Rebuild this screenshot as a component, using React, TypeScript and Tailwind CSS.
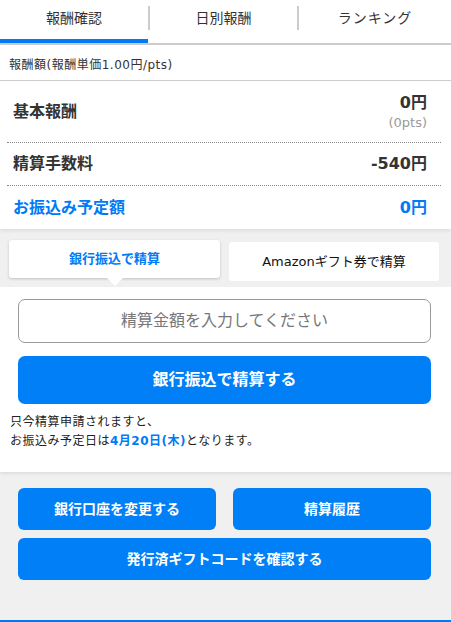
import React from "react";

const F = { fontFamily: '"DejaVu Sans", "Noto Sans CJK JP", sans-serif' };

export default function App() {
  return (
    <div className="w-[451px] h-[622px] bg-[#f0f0f0] text-[#333] overflow-hidden flex flex-col" style={F}>
      {/* tabs */}
      <div className="bg-white h-[45px] flex border-b-2 border-[#cccccc] shrink-0">
        <div className="relative w-[148px] flex items-center justify-center text-[14px] pb-[7px]">
          報酬確認
          <div className="absolute left-0 right-0 bottom-0 h-[4px] bg-[#007bf5]" />
        </div>
        <div className="w-[2px] h-[24px] mt-[6px] bg-[#cccccc]" />
        <div className="w-[147px] flex items-center justify-center text-[14px] pb-[7px]">日別報酬</div>
        <div className="w-[2px] h-[24px] mt-[6px] bg-[#cccccc]" />
        <div className="flex-1 flex items-center justify-center text-[14px] pb-[7px] tracking-[1px]">ランキング</div>
      </div>

      {/* summary */}
      <div className="bg-white shrink-0 shadow-[0_2px_3px_rgba(0,0,0,0.08)] relative z-10">
        <div className="h-[36px] border-b border-[#cccccc] flex items-end pb-[6px] pl-[9px] text-[12px] tracking-[0.5px]">
          報酬額(報酬単価1.00円/pts)
        </div>
        <div className="pl-[7px] pr-[10px]">
          <div className="h-[62px] border-b border-dotted border-[#888] flex items-center justify-between pl-[6px] pr-[14px]">
            <div className="text-[16px] font-bold">基本報酬</div>
            <div className="flex flex-col items-end">
              <div className="text-[16px] font-bold leading-[22px]">0円</div>
              <div className="text-[13px] text-[#999] leading-[18px]">(0pts)</div>
            </div>
          </div>
          <div className="h-[43px] border-b border-dotted border-[#888] flex items-center justify-between pl-[6px] pr-[14px]">
            <div className="text-[16px] font-bold">精算手数料</div>
            <div className="text-[16px] font-bold">-540円</div>
          </div>
          <div className="h-[43px] flex items-center justify-between pl-[6px] pr-[14px] text-[#007bf5]">
            <div className="text-[16px] font-bold">お振込み予定額</div>
            <div className="text-[16px] font-bold">0円</div>
          </div>
        </div>
      </div>

      {/* settlement method */}
      <div className="h-[58px] shrink-0 flex gap-[9px] pl-[9px] pr-[12px] pt-[11px]">
        <div className="relative w-[211px] h-[38px] bg-white rounded-[3px] shadow-[0_1px_3px_rgba(0,0,0,0.2)] flex items-center justify-center text-[13px] font-bold text-[#007bf5]">
          銀行振込で精算
          <div className="absolute left-[97px] top-[37px] w-0 h-0 border-l-[9px] border-r-[9px] border-t-[9px] border-l-transparent border-r-transparent border-t-white" />
        </div>
        <div className="w-[210px] h-[39px] mt-[2px] bg-white rounded-[3px] flex items-center justify-center text-[13px] text-[#111]">
          Amazonギフト券で精算
        </div>
      </div>

      {/* form */}
      <div className="bg-white shrink-0 h-[185px] pl-[18px] pr-[20px] pt-[12px] relative shadow-[0_2px_3px_rgba(0,0,0,0.08)]">
        <div className="h-[44px] border border-[#999] rounded-[7px] flex items-center justify-center text-[16px] text-[#777]">
          精算金額を入力してください
        </div>
        <div className="mt-[13px] h-[48px] bg-[#007ff7] rounded-[7px] flex items-center justify-center text-[16px] font-bold text-white">
          銀行振込で精算する
        </div>
        <div className="mt-[9px] -ml-[8px] text-[12px] leading-[19px] text-[#222] tracking-[0.5px]">
          <div>只今精算申請されますと、</div>
          <div>
            お振込み予定日は<span className="font-bold text-[#007bf5]">4月20日(木)</span>となります。
          </div>
        </div>
      </div>

      {/* bottom buttons */}
      <div className="flex-1 pl-[18px] pr-[20px] pt-[16px] flex flex-col gap-[8px] border-b-2 border-[#007bf5]">
        <div className="flex gap-[17px]">
          <div className="flex-1 h-[42px] bg-[#007ff7] rounded-[6px] flex items-center justify-center text-[14px] font-bold text-white">
            銀行口座を変更する
          </div>
          <div className="flex-1 h-[42px] bg-[#007ff7] rounded-[6px] flex items-center justify-center text-[14px] font-bold text-white">
            精算履歴
          </div>
        </div>
        <div className="h-[42px] bg-[#007ff7] rounded-[6px] flex items-center justify-center text-[14px] font-bold text-white">
          発行済ギフトコードを確認する
        </div>
      </div>
    </div>
  );
}
